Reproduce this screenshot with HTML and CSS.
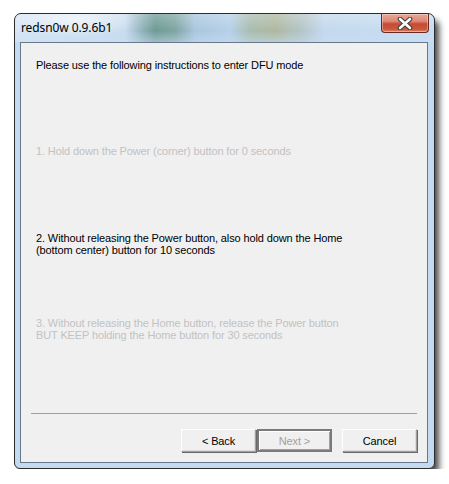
FILE: index.html
```html
<!DOCTYPE html>
<html>
<head>
<meta charset="utf-8">
<link rel="stylesheet" href="styles.css">
</head>
<body>
<div class="window">
  <div class="titlebar">
    <span class="title">redsn0w 0.9.6b1</span>
    <div class="close">
      <svg width="16" height="13" viewBox="0 0 16 13">
        <path d="M3 2 L13 11 M13 2 L3 11" stroke="#3c3c3c" stroke-width="4.6" stroke-linecap="round"/>
        <path d="M3 2 L13 11 M13 2 L3 11" stroke="#ffffff" stroke-width="2.6" stroke-linecap="round"/>
      </svg>
    </div>
  </div>
  <div class="client">
    <p class="intro">Please use the following instructions to enter DFU mode</p>
    <p class="step step1 dim">1. Hold down the Power (corner) button for 0 seconds</p>
    <p class="step step2">2. Without releasing the Power button, also hold down the Home<br>(bottom center) button for 10 seconds</p>
    <p class="step step3 dim">3. Without releasing the Home button, release the Power button<br>BUT KEEP holding the Home button for 30 seconds</p>
    <div class="sep"></div>
    <div class="buttons">
      <button class="btn">&lt; Back</button>
      <button class="btn next" disabled>Next &gt;</button>
      <button class="btn cancel">Cancel</button>
    </div>
  </div>
</div>
</body>
</html>
```
FILE: styles.css
```css
html, body {
  margin: 0;
  padding: 0;
  background: #ffffff;
}
body {
  padding: 13px 0 0 14px;
}
.window {
  box-sizing: border-box;
  width: 421px;
  height: 456px;
  border: 1px solid #2c2c2c;
  border-radius: 7px 7px 6px 6px;
  background:
    radial-gradient(ellipse 60px 18px at 60px 6px, rgba(255,255,255,0.6), rgba(255,255,255,0) 100%),
    linear-gradient(90deg,
      #d7e6f4 0px, #c9dcef 110px, #8fb1b8 128px, #6e9a94 140px, #7ea5a2 160px,
      #a9c6de 180px, #b6d0e8 215px, #a8bdb0 235px, #aeb8a0 260px, #b3c4c4 285px,
      #c4d9ee 310px, #c8ddf2 419px);
  background-size: 100% 28px, 100% 28px;
  background-repeat: no-repeat;
  background-color: #c4daf0;
  box-shadow: 5px 6px 6px -1px rgba(0,0,0,0.72);
  display: flex;
  flex-direction: column;
  overflow: hidden;
}
.titlebar {
  height: 28px;
  flex: none;
  display: flex;
  justify-content: space-between;
  align-items: flex-start;
  background: linear-gradient(180deg, rgba(255,255,255,0.25), rgba(255,255,255,0) 60%, rgba(200,222,243,0.5));
}
.title {
  font-family: "Noto Sans", "Open Sans", sans-serif;
  font-size: 12px;
  color: #000;
  padding-left: 6px;
  margin-top: 6px;
  line-height: 16px;
  letter-spacing: -0.1px;
}
.close {
  box-sizing: border-box;
  width: 48px;
  height: 19px;
  margin-right: 5px;
  border: 1px solid #6a2a22;
  border-top: none;
  border-radius: 0 0 4px 4px;
  background: linear-gradient(180deg, #e9a797 0%, #dc8a76 40%, #c74a32 55%, #c85a3c 85%, #d98a70 100%);
  display: flex;
  align-items: center;
  justify-content: center;
  box-shadow: inset 0 0 0 1px rgba(255,255,255,0.35);
}
.close svg { display: block; }
.client {
  box-sizing: border-box;
  margin-left: 5px;
  width: 408px;
  height: 421px;
  border: 1px solid #66788a;
  background: #f0f0f0;
  font-family: "Liberation Sans", Arial, sans-serif;
  font-size: 11px;
  line-height: 12px;
  letter-spacing: -0.12px;
  color: #000;
  padding: 16px 10px 0 15px;
  display: flex;
  flex-direction: column;
}
.client .intro,
.client .step {
  margin: 0;
  white-space: nowrap;
}
.client .dim { color: #c2c2c2; }
.client .step1 { margin-top: 74px; }
.client .step2 { margin-top: 75px; }
.client .step3 { margin-top: 61px; }
.sep {
  height: 1px;
  background: #a0a0a0;
  margin: 72px 0 0 -5px;
}
.buttons {
  display: flex;
  justify-content: flex-end;
  margin-top: 15px;
}
.btn {
  box-sizing: border-box;
  width: 75px;
  height: 23px;
  margin: 0;
  padding: 0;
  font-family: "Liberation Sans", Arial, sans-serif;
  font-size: 11px;
  letter-spacing: -0.12px;
  color: #000;
  background: #f0f0f0;
  border: 1px solid;
  border-color: #ffffff #a0a0a0 #a0a0a0 #ffffff;
  box-shadow: inset -1px -1px 0 #dcdcdc, 1px 1px 0 #696969;
  border-radius: 0;
}
.btn.next {
  border: 2px solid #7a7a7a;
  box-shadow: inset 1px 1px 0 #ffffff, inset -1px -1px 0 #a0a0a0;
  color: #a0a0a0;
  margin-left: 1px;
}
.btn.cancel {
  margin-left: 10px;
}
```
